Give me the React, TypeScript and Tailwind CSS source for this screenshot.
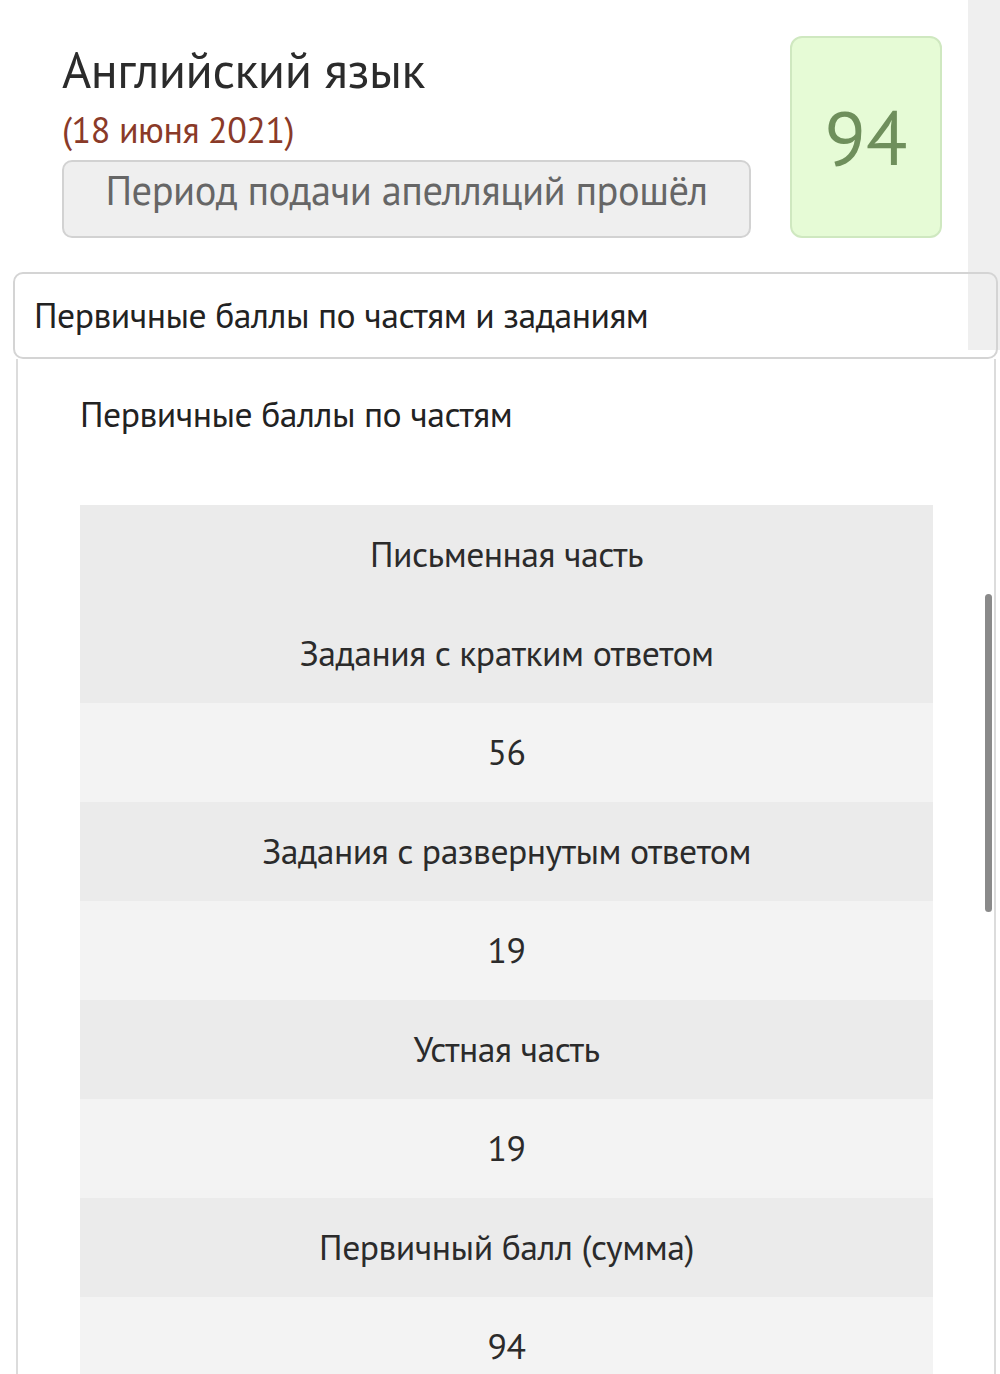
import React from "react";

const rows = [
  { text: "Письменная часть", dark: true },
  { text: "Задания с кратким ответом", dark: true },
  { text: "56", dark: false },
  { text: "Задания с развернутым ответом", dark: true },
  { text: "19", dark: false },
  { text: "Устная часть", dark: true },
  { text: "19", dark: false },
  { text: "Первичный балл (сумма)", dark: true },
  { text: "94", dark: false },
];

export default function App() {
  return (
    <div
      className="relative w-[1000px] h-[1374px] overflow-hidden bg-white text-[#2b2b2b]"
      style={{ fontFamily: '"PT Sans", "Open Sans", "Noto Sans", sans-serif' }}
    >
      {/* page scroll track on the right */}
      <div className="absolute right-0 top-0 w-[32px] h-[350px] bg-[#efefef]" />

      {/* Exam header */}
      <div className="flex justify-between pl-[62px] pr-[58px] pt-[36px]">
        <div className="flex flex-col">
          <h1 className="mt-[8px] text-[50px] leading-[52px] tracking-[-0.5px] text-[#2b2b2b]">
            Английский язык
          </h1>
          <span className="mt-[14px] text-[36px] leading-[40px] tracking-[-0.5px] text-[#8a3a28]">
            (18 июня 2021)
          </span>
          <div className="mt-[10px] w-[689px] h-[78px] pb-[18px] rounded-[10px] border-2 border-[#d2d2d2] bg-[#efefef] flex items-center justify-center text-[40.5px] tracking-[-0.5px] text-[#666666]">
            Период подачи апелляций прошёл
          </div>
        </div>
        <div className="w-[152px] h-[202px] rounded-[12px] border-2 border-[#cfe8c0] bg-[#e6fbd6] flex items-center justify-center text-[76px] text-[#6f8f5c]">
          94
        </div>
      </div>

      {/* Accordion header */}
      <div className="relative mt-[34px] ml-[13px] mr-[2px] h-[87px] rounded-[10px] border-2 border-[#d4d4d4] flex items-center pl-[19px] text-[35.7px] tracking-[-0.5px] text-[#222222]">
        Первичные баллы по частям и заданиям
      </div>

      {/* Accordion body */}
      <div className="ml-[16px] mr-[4px] h-[1100px] border-l-2 border-r-2 border-[#dcdcdc]">
        <div className="pl-[62px] pt-[35px] text-[35.7px] leading-[40px] tracking-[-0.5px] text-[#222222]">
          Первичные баллы по частям
        </div>
        <div className="ml-[62px] mt-[71px] w-[853px]">
          {rows.map((r, i) => (
            <div
              key={i}
              className={`h-[99px] flex items-center justify-center text-[35.7px] tracking-[-0.5px] text-[#2b2b2b] ${
                r.dark ? "bg-[#ebebeb]" : "bg-[#f3f3f3]"
              }`}
            >
              {r.text}
            </div>
          ))}
        </div>
      </div>

      {/* scrollbar thumb */}
      <div className="absolute left-[985px] top-[594px] w-[7px] h-[318px] rounded-full bg-[#8a8a8a]" />
    </div>
  );
}
